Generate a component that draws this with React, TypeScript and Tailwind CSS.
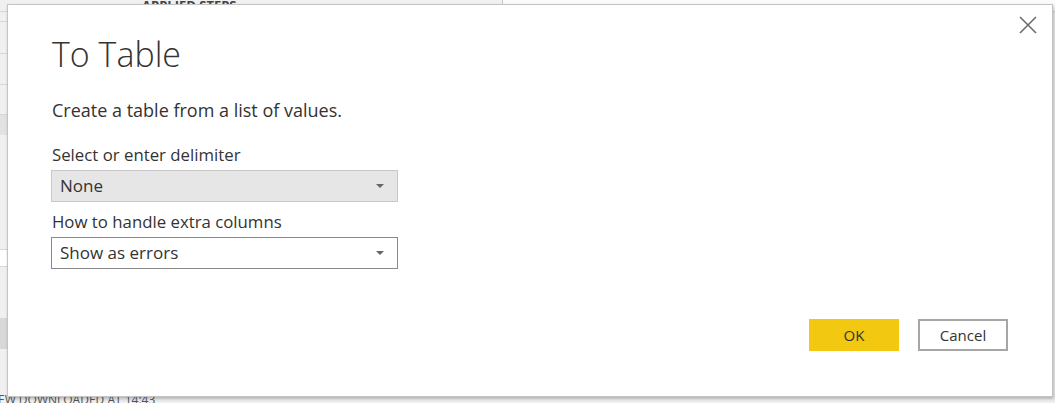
function Select({ value, grey }: { value: string; grey?: boolean }) {
  return (
    <div
      className={`-ml-[1px] flex h-[32px] w-[347px] items-center justify-between pl-[8px] pr-[13px] text-[17px] text-[#333] ${
        grey ? "border border-[#c8c8c8] bg-[#e6e6e6]" : "border border-[#8a8a8a] bg-white"
      }`}
    >
      <span>{value}</span>
      <svg width="8" height="4" viewBox="0 0 8 4">
        <path d="M0 0h8L4 4z" fill="#666" />
      </svg>
    </div>
  );
}

export default function App() {
  return (
    <div
      className="relative h-[403px] w-[1055px] overflow-hidden bg-[#f0f0f0]"
      style={{ fontFamily: '"Open Sans", "Noto Sans", sans-serif' }}
    >
      {/* page behind the dialog */}
      <div className="flex h-[12px] border-b border-[#d6d6d6]">
        <div className="w-[503px] border-r border-[#c8c8c8] pl-[142px] text-[13px] font-bold leading-[10px] text-[#444]">
          APPLIED STEPS
        </div>
        <div className="flex-1 bg-[#fafafa]" />
      </div>
      <div className="flex w-[7px] flex-col">
        <div className="h-[10px] border-b border-[#d8d8d8]" />
        <div className="h-[32px] border-b border-[#d8d8d8]" />
        <div className="h-[31px] border-b border-[#d8d8d8]" />
        <div className="h-[30px] border-b border-[#d8d8d8]" />
        <div className="h-[20px] bg-[#e2e2e2]" />
        <div className="h-[115px] border-b border-[#d8d8d8]" />
        <div className="h-[17px] border-b border-[#d8d8d8] bg-white" />
        <div className="h-[52px] border-b border-[#d8d8d8]" />
        <div className="h-[30px] bg-[#d8d8d8]" />
      </div>
      <div className="absolute bottom-[-6px] left-[-2px] text-[12px] text-[#555]">EW DOWNLOADED AT 14:43</div>

      {/* dialog */}
      <div className="absolute left-[7px] top-[4px] flex h-[393px] w-[1046px] flex-col border border-[#c4c4c4] bg-white pl-[44px] pr-[44px] shadow-[1px_2px_3px_rgba(0,0,0,0.25)]">
        <button className="absolute right-[15px] top-[11px]">
          <svg width="18" height="18" viewBox="0 0 18 18">
            <path d="M1 1L17 17M17 1L1 17" stroke="#6b6b6b" strokeWidth="1.6" />
          </svg>
        </button>
        <h1 className="mt-[25px] text-[34px] font-light leading-[48px] text-[#333]">To Table</h1>
        <p className="mt-[20px] text-[18px] leading-[24px] text-[#333]">Create a table from a list of values.</p>
        <label className="mt-[22px] text-[16.8px] leading-[22px] text-[#333]">Select or enter delimiter</label>
        <div className="mt-[4px]">
          <Select value="None" grey />
        </div>
        <label className="mt-[9px] text-[16.8px] leading-[22px] text-[#333]">How to handle extra columns</label>
        <div className="mt-[4px]">
          <Select value="Show as errors" />
        </div>
        <div className="mt-[50px] flex justify-end gap-[19px]">
          <button className="h-[32px] w-[90px] bg-[#f2c811] text-[15px] text-[#333]">OK</button>
          <button className="h-[32px] w-[90px] border-2 border-[#a6a6a6] bg-white text-[15px] text-[#333]">Cancel</button>
        </div>
      </div>
    </div>
  );
}
